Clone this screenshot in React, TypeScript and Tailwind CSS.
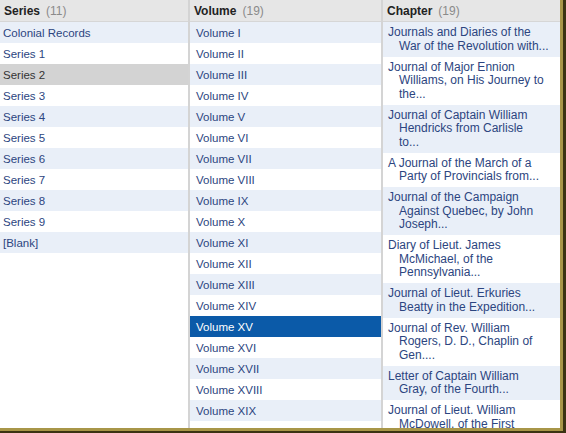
const series = [
  'Colonial Records',
  'Series 1',
  'Series 2',
  'Series 3',
  'Series 4',
  'Series 5',
  'Series 6',
  'Series 7',
  'Series 8',
  'Series 9',
  '[Blank]',
]

const volumes = [
  'Volume I',
  'Volume II',
  'Volume III',
  'Volume IV',
  'Volume V',
  'Volume VI',
  'Volume VII',
  'Volume VIII',
  'Volume IX',
  'Volume X',
  'Volume XI',
  'Volume XII',
  'Volume XIII',
  'Volume XIV',
  'Volume XV',
  'Volume XVI',
  'Volume XVII',
  'Volume XVIII',
  'Volume XIX',
  '',
]

// titles are pre-wrapped to match the list width
const chapters = [
  ['Journals and Diaries of the', 'War of the Revolution with...'],
  ['Journal of Major Ennion', 'Williams, on His Journey to', 'the...'],
  ['Journal of Captain William', 'Hendricks from Carlisle', 'to...'],
  ['A Journal of the March of a', 'Party of Provincials from...'],
  ['Journal of the Campaign', 'Against Quebec, by John', 'Joseph...'],
  ['Diary of Lieut. James', 'McMichael, of the', 'Pennsylvania...'],
  ['Journal of Lieut. Erkuries', 'Beatty in the Expedition...'],
  ['Journal of Rev. William', 'Rogers, D. D., Chaplin of', 'Gen....'],
  ['Letter of Captain William', 'Gray, of the Fourth...'],
  ['Journal of Lieut. William', 'McDowell, of the First', 'Pennsylvania...'],
]

function Header({ title, count }: { title: string; count: number }) {
  return (
    <div className="h-[22px] shrink-0 bg-[#e6e6e6] border-b border-[#d6d6d6] flex items-center pt-[1px] px-[4px] text-[12px]">
      <span className="font-bold text-[#222]">{title}</span>
      <span className="ml-[6px] text-[#8a8a8a]">({count})</span>
    </div>
  )
}

function rowClass(i: number, selected: number, tone: 'grey' | 'blue') {
  if (i === selected) {
    return tone === 'grey' ? 'bg-[#d3d3d3] text-[#333]' : 'bg-[#0b5aa8] text-white'
  }
  return i % 2 === 0 ? 'bg-[#e9eff8] text-[#2c4580]' : 'bg-white text-[#2c4580]'
}

export default function App() {
  return (
    <div className="w-[566px] h-[433px] border-r-[3px] border-b-[2px] border-[#3b3312] overflow-hidden font-['Liberation_Sans',Arial,sans-serif]">
      <div className="w-full h-full border-r-[3px] border-b-[3px] border-[#a89648] bg-white flex overflow-hidden">
        <div className="w-[190px] shrink-0 border-r-2 border-[#d4d4d4] flex flex-col">
          <Header title="Series" count={11} />
          {series.map((s, i) => (
            <div key={s} className={`h-[21px] shrink-0 flex items-center pt-[2px] px-[3px] text-[11.5px] ${rowClass(i, 2, 'grey')}`}>
              {s}
            </div>
          ))}
        </div>
        <div className="w-[193px] shrink-0 border-r-2 border-[#d4d4d4] flex flex-col">
          <Header title="Volume" count={19} />
          {volumes.map((v, i) => (
            <div key={i} className={`h-[21px] shrink-0 flex items-center pt-[2px] px-[6px] text-[11.5px] ${rowClass(i, 14, 'blue')}`}>
              {v}
            </div>
          ))}
        </div>
        <div className="flex-1 min-w-0 flex flex-col">
          <Header title="Chapter" count={19} />
          {chapters.map((lines, i) => (
            <div
              key={i}
              className={`shrink-0 pt-[4px] pb-[3.5px] pl-[5px] pr-[4px] text-[12px] leading-[13.5px] whitespace-nowrap ${rowClass(i, -1, 'blue')}`}
            >
              {lines.map((l, j) => (
                <div key={j} className={j > 0 ? 'pl-[11px]' : ''}>
                  {l}
                </div>
              ))}
            </div>
          ))}
        </div>
      </div>
    </div>
  )
}
